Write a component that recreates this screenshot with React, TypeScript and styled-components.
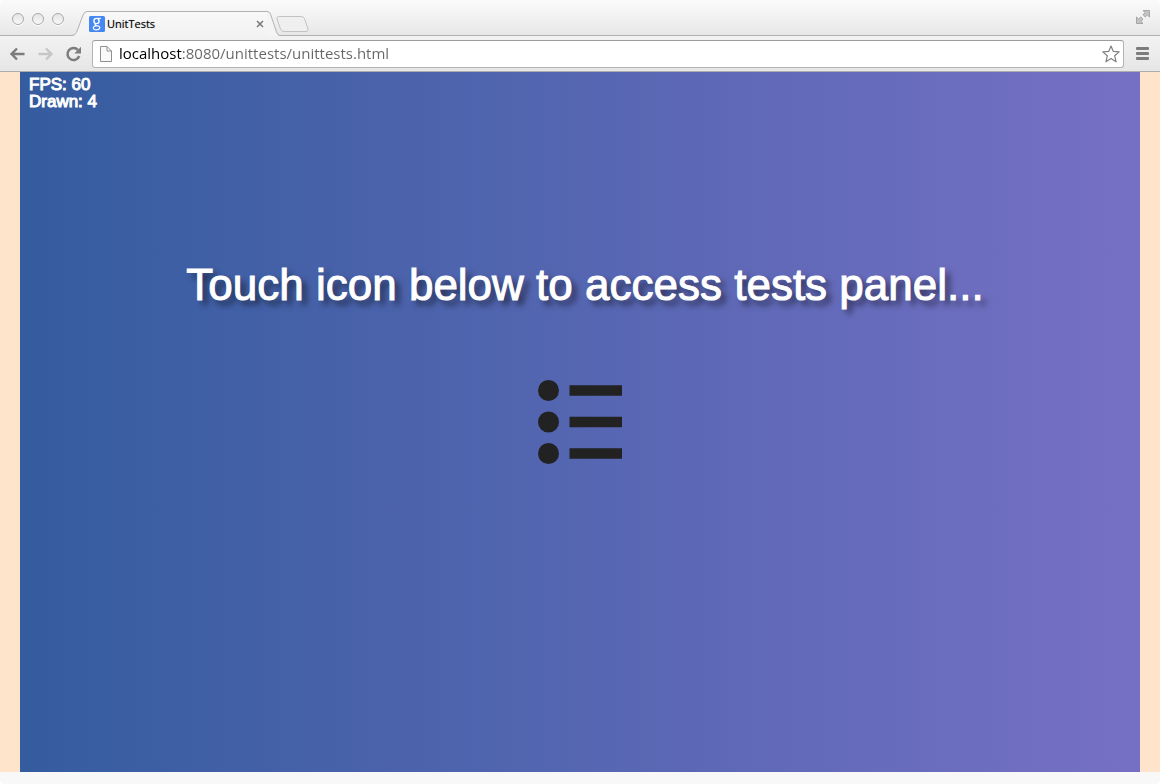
import React from "react";
import styled, { createGlobalStyle } from "styled-components";

const GlobalStyle = createGlobalStyle`
  *, *::before, *::after { box-sizing: border-box; }
  html, body, #root { height: 100%; }
  body { margin: 0; background: #ffffff; font-family: "Open Sans", "Noto Sans", sans-serif; }
  button { margin: 0; padding: 0; border: 0; background: none; }
  svg { display: block; }
`;

const BrowserWindow = styled.div`
  display: flex;
  flex-direction: column;
  min-height: 100%;
  border-radius: 5px;
  overflow: hidden;
  background: #f8f8f8;
`;

const TabStrip = styled.header`
  display: flex;
  align-items: flex-end;
  height: 36px;
  padding-left: 12px;
  background: linear-gradient(#fbfbfb, #e7e7e7);
  box-shadow: inset 0 -1px 0 #b0b0b0;
`;

const WindowControls = styled.div`
  display: flex;
  align-self: center;
  gap: 8px;
  margin-top: 2px;
`;

const WindowButton = styled.button`
  width: 12px;
  height: 12px;
  border: 1px solid #aaaaaa;
  border-radius: 50%;
  background: linear-gradient(#e4e4e4, #f8f8f8);
  box-shadow: 0 1px 0 #ffffff;
`;

const Tab = styled.div`
  display: flex;
  height: 25px;
  margin-left: 8px;
`;

const TabBody = styled.div`
  display: flex;
  align-items: center;
  width: 180px;
  padding: 0 0 0 2px;
  border-top: 1px solid #b2b2b2;
  background: linear-gradient(#f8f8f8, #f2f2f2);
`;

const TabTitle = styled.span`
  flex: 1;
  padding-left: 2px;
  font-size: 11px;
  line-height: 16px;
  color: #000000;
  text-shadow: 0 0 1px rgba(0, 0, 0, 0.4);
`;

const IconButton = styled.button<{ $width: number; $height: number }>`
  display: flex;
  flex: none;
  align-items: center;
  justify-content: center;
  width: ${(p) => p.$width}px;
  height: ${(p) => p.$height}px;
`;

const NewTabButton = styled(IconButton)`
  margin: 0 0 4px -4px;
`;

const FullScreenButton = styled(IconButton)`
  margin: 0 10px 12px auto;
`;

const Toolbar = styled.nav`
  display: flex;
  align-items: center;
  height: 36px;
  padding: 0 11px 0 9px;
  border-bottom: 1px solid #acacac;
  background: linear-gradient(#f2f2f2, #e6e6e6);
`;

const NavButtons = styled.div`
  display: flex;
  gap: 11px;
  padding-right: 10px;
`;

const AddressBar = styled.label`
  display: flex;
  flex: 1;
  align-items: center;
  height: 28px;
  margin-right: 11px;
  padding: 0 3px 0 7px;
  border: 1px solid #b4b4b4;
  border-top-color: #9c9c9c;
  border-radius: 3px;
  background: #ffffff;
`;

const AddressInput = styled.input`
  flex: 1;
  min-width: 0;
  height: 24px;
  margin-left: 7px;
  padding: 0 0 2px;
  border: 0;
  outline: 0;
  font-family: "Open Sans", "Noto Sans", sans-serif;
  font-size: 15px;
  line-height: 22px;
  color: transparent;
  background: linear-gradient(90deg, #000000 63px, #666666 63px);
  -webkit-background-clip: text;
  background-clip: text;
`;

const Page = styled.main`
  flex: 1;
  display: flex;
  margin-bottom: 12px;
  padding: 0 20px;
  background: #fde4ca;
`;

const Stage = styled.section`
  flex: 1;
  display: flex;
  flex-direction: column;
  align-items: center;
  background: linear-gradient(90deg, #355c9f, #7670c4);
  font-family: "Liberation Sans", Arial, sans-serif;
  color: #ffffff;
`;

const Stats = styled.div`
  align-self: flex-start;
  padding: 4px 9px;
  font-size: 17px;
  line-height: 17px;
  -webkit-text-stroke: 1px #ffffff;
`;

const StatLine = styled.div`
  white-space: nowrap;
`;

const Heading = styled.h1`
  margin: 145px 0 0;
  padding-left: 10px;
  font-size: 44px;
  line-height: 52px;
  font-weight: 400;
  -webkit-text-stroke: 1px #ffffff;
  text-shadow: 5px 5px 6px rgba(0, 0, 0, 0.6);
`;

const PanelButton = styled(IconButton)`
  margin-top: 69px;
`;

const statLines = ["FPS: 60", "Drawn: 4"];

export default function App() {
  return (
    <BrowserWindow>
      <GlobalStyle />
      <TabStrip>
        <WindowControls>
          <WindowButton aria-label="Close window" />
          <WindowButton aria-label="Minimize window" />
          <WindowButton aria-label="Zoom window" />
        </WindowControls>
        <Tab>
          <svg width="15" height="25" viewBox="0 0 15 25">
            <path d="M0 25 Q3.5 24 4.5 21.5 L11 4 Q12.200 0.500 15 0.500 V25Z" fill="#f4f4f4" />
            <path d="M0 24.500 Q3.500 24 4.500 21.500 L11 4 Q12.200 0.500 15 0.500" fill="none" stroke="#b2b2b2" />
          </svg>
          <TabBody>
            <svg width="16" height="16" viewBox="0 0 16 16">
              <rect width="16" height="16" rx="1.500" fill="#4587f3" />
              <g fill="none" stroke="#ffffff">
                <ellipse cx="7.500" cy="5" rx="2.600" ry="2.600" strokeWidth="1.400" />
                <path d="M8.500 2.300 H12" strokeWidth="1" />
                <path d="M6.700 7.500 C5.300 8.700 6.200 9.300 7.800 9.600 C10.300 10 11.200 11 10.700 12.300 C9.900 14.300 4.900 14.300 4.300 12.300 C4 10.900 5.700 9.800 8 9.700" strokeWidth="1.200" />
              </g>
            </svg>
            <TabTitle>UnitTests</TabTitle>
            <IconButton $width={14} $height={14} aria-label="Close tab">
              <svg width="8" height="8" viewBox="0 0 8 8">
                <path d="M1 1 L7 7 M7 1 L1 7" stroke="#777777" strokeWidth="1.500" />
              </svg>
            </IconButton>
          </TabBody>
          <svg width="13" height="25" viewBox="0 0 13 25">
            <path d="M0 0.500 Q2.500 0.500 3.500 3 L9.500 21 Q10.500 24.300 13 24.500 V25 H0Z" fill="#f4f4f4" />
            <path d="M0 0.500 Q2.500 0.500 3.500 3 L9.500 21 Q10.500 24.300 13 24.500" fill="none" stroke="#b2b2b2" />
          </svg>
        </Tab>
        <NewTabButton $width={33} $height={16} aria-label="New tab">
          <svg width="33" height="16" viewBox="0 0 33 16">
            <path
              d="M2.500 0.500 H25 Q27.500 0.500 28.500 2.500 L32 13 Q32.500 15.500 30 15.500 H8 Q5.500 15.500 4.500 13 L1 3 Q0.500 0.500 2.500 0.500Z"
              fill="#efefef"
              stroke="#c2c2c2"
            />
          </svg>
        </NewTabButton>
        <FullScreenButton $width={14} $height={14} aria-label="Full screen">
          <svg width="14" height="14" viewBox="0 0 14 14">
            <g fill="#c4c4c4" stroke="#999999" strokeWidth="0.800">
              <path d="M7 0.500 H13.500 V7 L11.400 5 L9.300 7 L7 4.700 L9.200 2.600Z" />
              <path d="M7 13.500 H0.500 V7 L2.600 9 L4.700 7 L7 9.300 L4.800 11.400Z" />
            </g>
          </svg>
        </FullScreenButton>
      </TabStrip>
      <Toolbar>
        <NavButtons>
          <IconButton $width={17} $height={16} aria-label="Back">
            <svg width="17" height="16" viewBox="0 0 17 16">
              <path d="M15.500 8 H3 M8 2.500 L2.500 8 L8 13.500" fill="none" stroke="#7c7c7c" strokeWidth="2.400" />
            </svg>
          </IconButton>
          <IconButton $width={17} $height={16} aria-label="Forward">
            <svg width="17" height="16" viewBox="0 0 17 16">
              <path d="M1.500 8 H14 M9 2.500 L14.500 8 L9 13.500" fill="none" stroke="#c6c6c6" strokeWidth="2.400" />
            </svg>
          </IconButton>
          <IconButton $width={17} $height={16} aria-label="Reload">
            <svg width="17" height="16" viewBox="0 0 17 16">
              <path d="M13 4 A6 6 0 1 0 14.200 10" fill="none" stroke="#7c7c7c" strokeWidth="2.500" />
              <path d="M16 0.800 V7.500 H9.300Z" fill="#7c7c7c" />
            </svg>
          </IconButton>
        </NavButtons>
        <AddressBar>
          <svg width="12" height="16" viewBox="0 0 12 16">
            <path d="M0.500 0.500 H7 L11.500 5 V15.500 H0.500Z M7 0.500 V5 H11.500" fill="#fafafa" stroke="#909090" />
          </svg>
          <AddressInput aria-label="Address" defaultValue="localhost:8080/unittests/unittests.html" spellCheck={false} />
          <IconButton $width={18} $height={18} aria-label="Bookmark this page">
            <svg width="18" height="18" viewBox="0 0 18 18">
              <path
                d="M9 1 L11.300 6.400 L17.200 6.900 L12.700 10.800 L14.100 16.800 L9 13.600 L3.900 16.800 L5.300 10.800 L0.800 6.900 L6.700 6.400Z"
                fill="#ffffff"
                stroke="#808080"
                strokeWidth="1.200"
                strokeLinejoin="round"
              />
            </svg>
          </IconButton>
        </AddressBar>
        <IconButton $width={14} $height={14} aria-label="Menu">
          <svg width="14" height="14" viewBox="0 0 14 14">
            <g fill="#7c7c7c">
              <rect x="1" y="0" width="13" height="3" rx="1" />
              <rect x="1" y="5" width="13" height="3" rx="1" />
              <rect x="1" y="10" width="13" height="3" rx="1" />
            </g>
          </svg>
        </IconButton>
      </Toolbar>
      <Page>
        <Stage>
          <Stats>
            {statLines.map((line) => (
              <StatLine key={line}>{line}</StatLine>
            ))}
          </Stats>
          <Heading>Touch icon below to access tests panel...</Heading>
          <PanelButton $width={84} $height={84} aria-label="Open tests panel">
            <svg width="84" height="84" viewBox="0 0 84 84" fill="#222222">
              {[10.5, 42, 73.5].map((y) => (
                <React.Fragment key={y}>
                  <circle cx="10.500" cy={y} r="10.500" />
                  <rect x="31.500" y={y - 5.25} width="52.500" height="10.500" />
                </React.Fragment>
              ))}
            </svg>
          </PanelButton>
        </Stage>
      </Page>
    </BrowserWindow>
  );
}
